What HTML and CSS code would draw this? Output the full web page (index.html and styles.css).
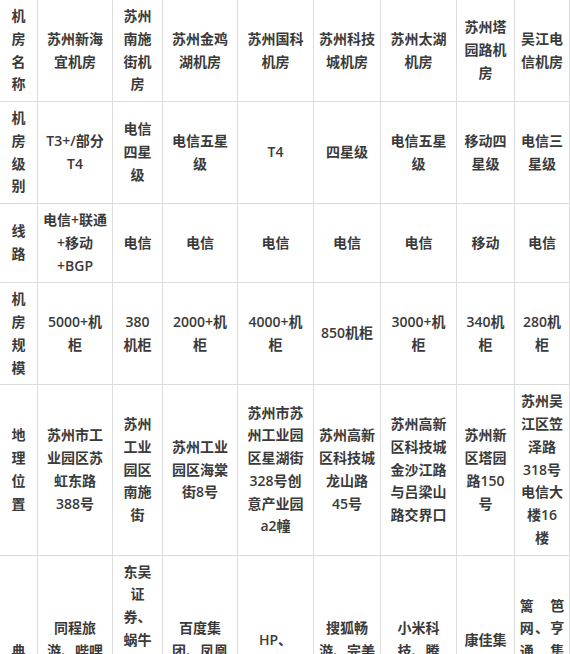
FILE: index.html
```html
<!DOCTYPE html>
<html lang="zh-CN">
<head>
<meta charset="utf-8">
<title>苏州机房</title>
<link rel="stylesheet" href="styles.css">
</head>
<body>
<table class="idc">
  <colgroup>
    <col class="c1"><col class="c2"><col class="c3"><col class="c4"><col class="c5"><col class="c6"><col class="c7"><col class="c8"><col class="c9">
  </colgroup>
  <tbody>
    <tr>
      <td>机房名称</td>
      <td>苏州新海宜机房</td>
      <td>苏州南施街机房</td>
      <td>苏州金鸡湖机房</td>
      <td>苏州国科机房</td>
      <td>苏州科技城机房</td>
      <td>苏州太湖机房</td>
      <td>苏州塔园路机房</td>
      <td>吴江电信机房</td>
    </tr>
    <tr>
      <td>机房级别</td>
      <td>T3+/部分T4</td>
      <td>电信四星级</td>
      <td>电信五星级</td>
      <td>T4</td>
      <td>四星级</td>
      <td>电信五星级</td>
      <td>移动四星级</td>
      <td>电信三星级</td>
    </tr>
    <tr>
      <td>线路</td>
      <td>电信+联通+移动+BGP</td>
      <td>电信</td>
      <td>电信</td>
      <td>电信</td>
      <td>电信</td>
      <td>电信</td>
      <td>移动</td>
      <td>电信</td>
    </tr>
    <tr>
      <td>机房规模</td>
      <td>5000+机柜</td>
      <td>380 机柜</td>
      <td>2000+机柜</td>
      <td>4000+机柜</td>
      <td>850机柜</td>
      <td>3000+机柜</td>
      <td>340机柜</td>
      <td>280机柜</td>
    </tr>
    <tr>
      <td>地理位置</td>
      <td>苏州市工业园区苏虹东路388号</td>
      <td>苏州工业园区南施街</td>
      <td>苏州工业园区海棠街8号</td>
      <td>苏州市苏州工业园区星湖街328号创意产业园a2幢</td>
      <td>苏州高新区科技城龙山路45号</td>
      <td>苏州高新区科技城金沙江路与吕梁山路交界口</td>
      <td>苏州新区塔园路150号</td>
      <td>苏州吴江区笠泽路318号电信大楼16<br>楼</td>
    </tr>
    <tr>
      <td>典型客户</td>
      <td>同程旅游、哔哩哔哩、苏州银行、国泰君安等</td>
      <td>东吴证券、蜗牛数字、苏州银行、中科院等</td>
      <td>百度集团、凤凰网、阿里巴巴、京东商城、网易等</td>
      <td>HP、Microsoft、联想集团、中国银联等</td>
      <td>搜狐畅游、完美世界、巨人网络、盛大游戏等</td>
      <td>小米科技、腾讯、滴滴出行、美团点评、携程等</td>
      <td>康佳集团、苏宁易购、国美等</td>
      <td class="justify">篱笆网、亨通集团、中国电信、苏州移动等</td>
    </tr>
  </tbody>
</table>
</body>
</html>
```

FILE: styles.css
```css
html, body {
  margin: 0;
  padding: 0;
  background: #ffffff;
}

.idc {
  table-layout: fixed;
  width: 570px;
  border-collapse: separate;
  border-spacing: 0;
  font-family: "Open Sans", "Noto Sans CJK SC", sans-serif;
  font-size: 14px;
  font-weight: 600;
  line-height: 22.75px;
  color: #3a3a3a;
}

.idc col.c1 { width: 38px; }
.idc col.c2 { width: 75px; }
.idc col.c3 { width: 50px; }
.idc col.c4 { width: 75px; }
.idc col.c5 { width: 76px; }
.idc col.c6 { width: 67px; }
.idc col.c7 { width: 76px; }
.idc col.c8 { width: 58px; }
.idc col.c9 { width: 55px; }

.idc td {
  padding: 5px 4.8px;
  border-right: 1px solid #dcdcdc;
  border-bottom: 1px solid #dcdcdc;
  text-align: center;
  vertical-align: middle;
  word-break: normal;
  overflow-wrap: normal;
}

.idc td.justify {
  text-align: justify;
}
```
